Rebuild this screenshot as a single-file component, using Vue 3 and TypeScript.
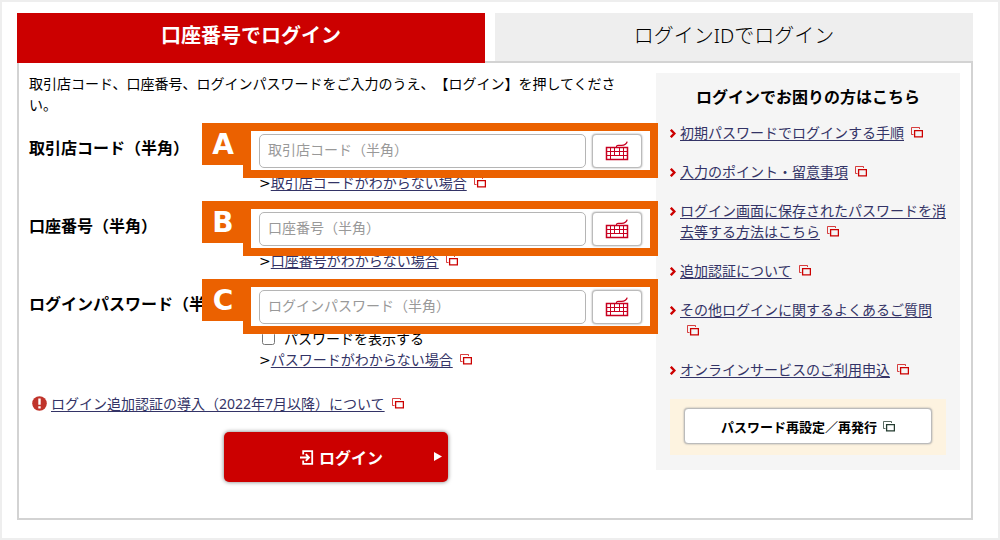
<script setup lang="ts">
import { h, ref } from 'vue'

interface Field {
  id: string
  mark: string
  label: string
  help: string
  type: string
}

const fields: Field[] = [
  { id: 'branch', mark: 'A', label: '取引店コード（半角）', help: '取引店コードがわからない場合', type: 'text' },
  { id: 'account', mark: 'B', label: '口座番号（半角）', help: '口座番号がわからない場合', type: 'text' },
  { id: 'password', mark: 'C', label: 'ログインパスワード（半角）', help: 'パスワードがわからない場合', type: 'password' },
]

const helpLinks: string[] = [
  '初期パスワードでログインする手順',
  '入力のポイント・留意事項',
  'ログイン画面に保存されたパスワードを消去等する方法はこちら',
  '追加認証について',
  'その他ログインに関するよくあるご質問',
  'オンラインサービスのご利用申込',
]

const values = ref<Record<string, string>>({ branch: '', account: '', password: '' })
const showPassword = ref(false)
const activeTab = ref<'account' | 'id'>('account')

const WindowIcon = () =>
  h('svg', { viewBox: '0 0 12 11', width: 12, height: 11, fill: 'none', stroke: 'currentColor', 'aria-hidden': 'true' }, [
    h('path', { d: 'M2.5 7.5H0.5V0.5H8.5V2', 'stroke-width': 1, opacity: 0.75 }),
    h('path', { d: 'M3.6 3.6H11.4V9.9H3.6Z', 'stroke-width': 1.3 }),
  ])
</script>

<template>
  <div class="page">
    <div class="tabs" role="tablist">
      <button
        type="button"
        role="tab"
        class="tab"
        :class="{ active: activeTab === 'account' }"
        :aria-selected="activeTab === 'account'"
        @click="activeTab = 'account'"
      >口座番号でログイン</button>
      <button
        type="button"
        role="tab"
        class="tab"
        :class="{ active: activeTab === 'id' }"
        :aria-selected="activeTab === 'id'"
        @click="activeTab = 'id'"
      >ログインIDでログイン</button>
    </div>

    <div class="panel">
      <form class="login" @submit.prevent>
        <p class="lead">取引店コード、口座番号、ログインパスワードをご入力のうえ、【ログイン】を押してください。</p>

        <div class="fields">
          <div v-for="f in fields" :key="f.id" class="field">
            <label class="name" :for="f.id">{{ f.label }}</label>
            <div class="body">
              <div class="control">
                <input
                  :id="f.id"
                  v-model="values[f.id]"
                  class="text"
                  :type="f.type === 'password' && showPassword ? 'text' : f.type"
                  :placeholder="f.label"
                />
                <button type="button" class="keys" aria-label="キーボード">
                  <svg viewBox="0 0 24 20" width="24" height="20" fill="none" stroke="currentColor" aria-hidden="true">
                    <path d="M11.5 6C11.5 3.6 13.5 4.6 16.5 4.4S21.5 3.2 22.2 0.6" stroke-width="1.3" />
                    <path d="M1.5 6.5H22.5V18.5H1.5Z" stroke-width="1.5" />
                    <path d="M1.5 10.5H22.5M1.5 14.5H22.5M5.5 6.5V18.5M9.5 6.5V14.5M14.5 6.5V14.5M18.5 6.5V18.5" stroke-width="1" />
                  </svg>
                </button>
                <div class="callout"><span class="mark">{{ f.mark }}</span></div>
              </div>
              <div v-if="f.type === 'password'" class="show">
                <input id="show" v-model="showPassword" type="checkbox" />
                <label for="show">パスワードを表示する</label>
              </div>
              <div class="help"><span class="gt">&gt;</span><a href="#">{{ f.help }}</a><WindowIcon class="ext" /></div>
            </div>
          </div>
        </div>

        <div class="notice">
          <svg class="alert" viewBox="0 0 15 15" width="15" height="15" aria-hidden="true">
            <circle cx="7.5" cy="7.5" r="7.3" fill="#c0342b" />
            <path d="M6.3 2.6H8.7V8.8H6.3ZM6.3 10.2H8.7V12.6H6.3Z" fill="#fff" />
          </svg>
          <a href="#">ログイン追加認証の導入（2022年7月以降）について</a><WindowIcon class="ext" />
        </div>

        <button type="submit" class="submit">
          <svg viewBox="0 0 14 15" width="14" height="15" fill="none" stroke="currentColor" aria-hidden="true">
            <path d="M3.2 4.5V1.2H12.2V13.8H3.2V10.5" stroke-width="1.8" />
            <path d="M0 7.5H8.5M5.8 4.2L9 7.5L5.8 10.8" stroke-width="1.9" />
          </svg>
          <span>ログイン</span>
          <svg class="play" viewBox="0 0 8 9" width="8" height="9" aria-hidden="true"><path d="M0 0L8 4.5L0 9Z" fill="currentColor" /></svg>
        </button>
      </form>

      <aside class="side">
        <h2>ログインでお困りの方はこちら</h2>
        <ul>
          <li v-for="text in helpLinks" :key="text">
            <svg class="chevron" viewBox="0 0 6 9" width="6" height="9" fill="none" stroke="currentColor" aria-hidden="true">
              <path d="M0.8 0.8L4.4 4.5L0.8 8.2" stroke-width="2.4" />
            </svg>
            <div><a href="#">{{ text }}</a><WindowIcon class="ext" /></div>
          </li>
        </ul>
        <div class="reset">
          <button type="button"><span>パスワード再設定／再発行</span><WindowIcon /></button>
        </div>
      </aside>
    </div>
  </div>
</template>

<style>
body {
  margin: 0;
}
</style>

<style scoped>
* {
  box-sizing: border-box;
}

.page {
  min-height: 100vh;
  padding: 11px 25px 18px 15px;
  border: 2px solid #eee;
  background: #fff;
  color: #000;
  font: 14px/21px "Noto Sans", "Noto Sans CJK JP", sans-serif;
  text-spacing-trim: space-all;
}

button,
input {
  font-family: inherit;
  color: inherit;
}

button {
  cursor: pointer;
}

a {
  color: #336;
  text-decoration: underline;
  text-underline-offset: 2px;
}

.tabs {
  display: grid;
  grid-template-columns: 468fr 478fr;
  gap: 10px;
}

.tab {
  height: 48px;
  padding: 0 0 2px;
  border: 0;
  background: #eee;
  font-size: 20px;
  line-height: 28px;
  font-weight: 300;
}

.tab.active {
  position: relative;
  z-index: 1;
  height: 50px;
  margin-bottom: -2px;
  padding-bottom: 4px;
  background: #c00;
  color: #fff;
  font-weight: 700;
}

.panel {
  display: grid;
  grid-template-columns: minmax(0, 1fr) 304px;
  gap: 14px;
  align-items: start;
  padding: 10px 11px 36px 10px;
  border: 2px solid #d3d3d3;
}

.lead {
  margin: 0 0 19px;
  padding-right: 20px;
}

.fields {
  display: grid;
  gap: 19px;
}

.field {
  display: grid;
  grid-template-columns: 230px minmax(0, 1fr);
}

.name {
  padding-top: 2px;
  font-size: 16px;
  line-height: 24px;
  font-weight: 700;
  white-space: nowrap;
}

.control {
  position: relative;
  display: flex;
  gap: 6px;
  margin-bottom: 4px;
}

.text {
  flex: 1;
  min-width: 0;
  height: 34px;
  padding: 0 8px 3px;
  border: 1px solid #b5b5b5;
  border-radius: 5px;
  background: #fff;
  font-size: 14px;
}

.text::placeholder {
  color: #999;
  opacity: 1;
}

.keys {
  display: flex;
  align-items: center;
  justify-content: center;
  width: 50px;
  height: 34px;
  padding: 0;
  border: 1px solid #bbb;
  border-radius: 4px;
  background: #fff;
  box-shadow: 0 0 2px #999;
  color: #c80020;
}

.callout {
  position: absolute;
  inset: -11px -16px -10px;
  border: 8px solid #eb6100;
  pointer-events: none;
}

.mark {
  position: absolute;
  top: -8px;
  left: -49px;
  width: 42px;
  height: 42px;
  background: #eb6100;
  color: #fff;
  font-family: "DejaVu Sans", sans-serif;
  font-size: 28px;
  line-height: 44px;
  font-weight: 700;
  text-align: center;
}

.show {
  display: flex;
  align-items: center;
  gap: 9px;
}

.show input {
  width: 13px;
  height: 13px;
  margin: 0 0 0 3px;
}

.gt {
  font-family: "DejaVu Sans", sans-serif;
  line-height: 1;
}

.ext {
  display: inline-block;
  margin-left: 7px;
  color: #c00;
}

.notice {
  display: flex;
  align-items: center;
  margin-top: 23px;
  padding-left: 3px;
}

.alert {
  margin-right: 4px;
}

.submit {
  position: relative;
  display: flex;
  align-items: center;
  justify-content: center;
  gap: 5px;
  width: 224px;
  height: 50px;
  margin: 18px auto 0;
  padding: 0 0 0 12px;
  border: 0;
  border-radius: 5px;
  background: #c00;
  box-shadow: 0 0 4px #777;
  color: #fff;
  font-size: 16px;
  font-weight: 700;
}

.play {
  position: absolute;
  top: 20px;
  right: 6px;
}

.side {
  padding: 12px 14px 15px;
  background: #f5f5f5;
}

.side h2 {
  margin: 0 0 13px;
  font-size: 16px;
  line-height: 24px;
  text-align: center;
}

.side ul {
  display: grid;
  gap: 18px;
  margin: 0 0 19px;
  padding: 0;
  list-style: none;
}

.side li {
  display: flex;
  gap: 4px;
}

.chevron {
  flex: none;
  margin-top: 7px;
  color: #c00;
}

.reset {
  padding: 9px 14px 11px;
  background: #fdf3e0;
}

.reset button {
  display: flex;
  align-items: center;
  justify-content: center;
  gap: 6px;
  width: 100%;
  height: 36px;
  border: 1px solid #bbb;
  border-radius: 4px;
  background: #fff;
  box-shadow: 0 0 2px #999;
  font-size: 13px;
  font-weight: 700;
}

.reset svg {
  color: #243c30;
}
</style>
